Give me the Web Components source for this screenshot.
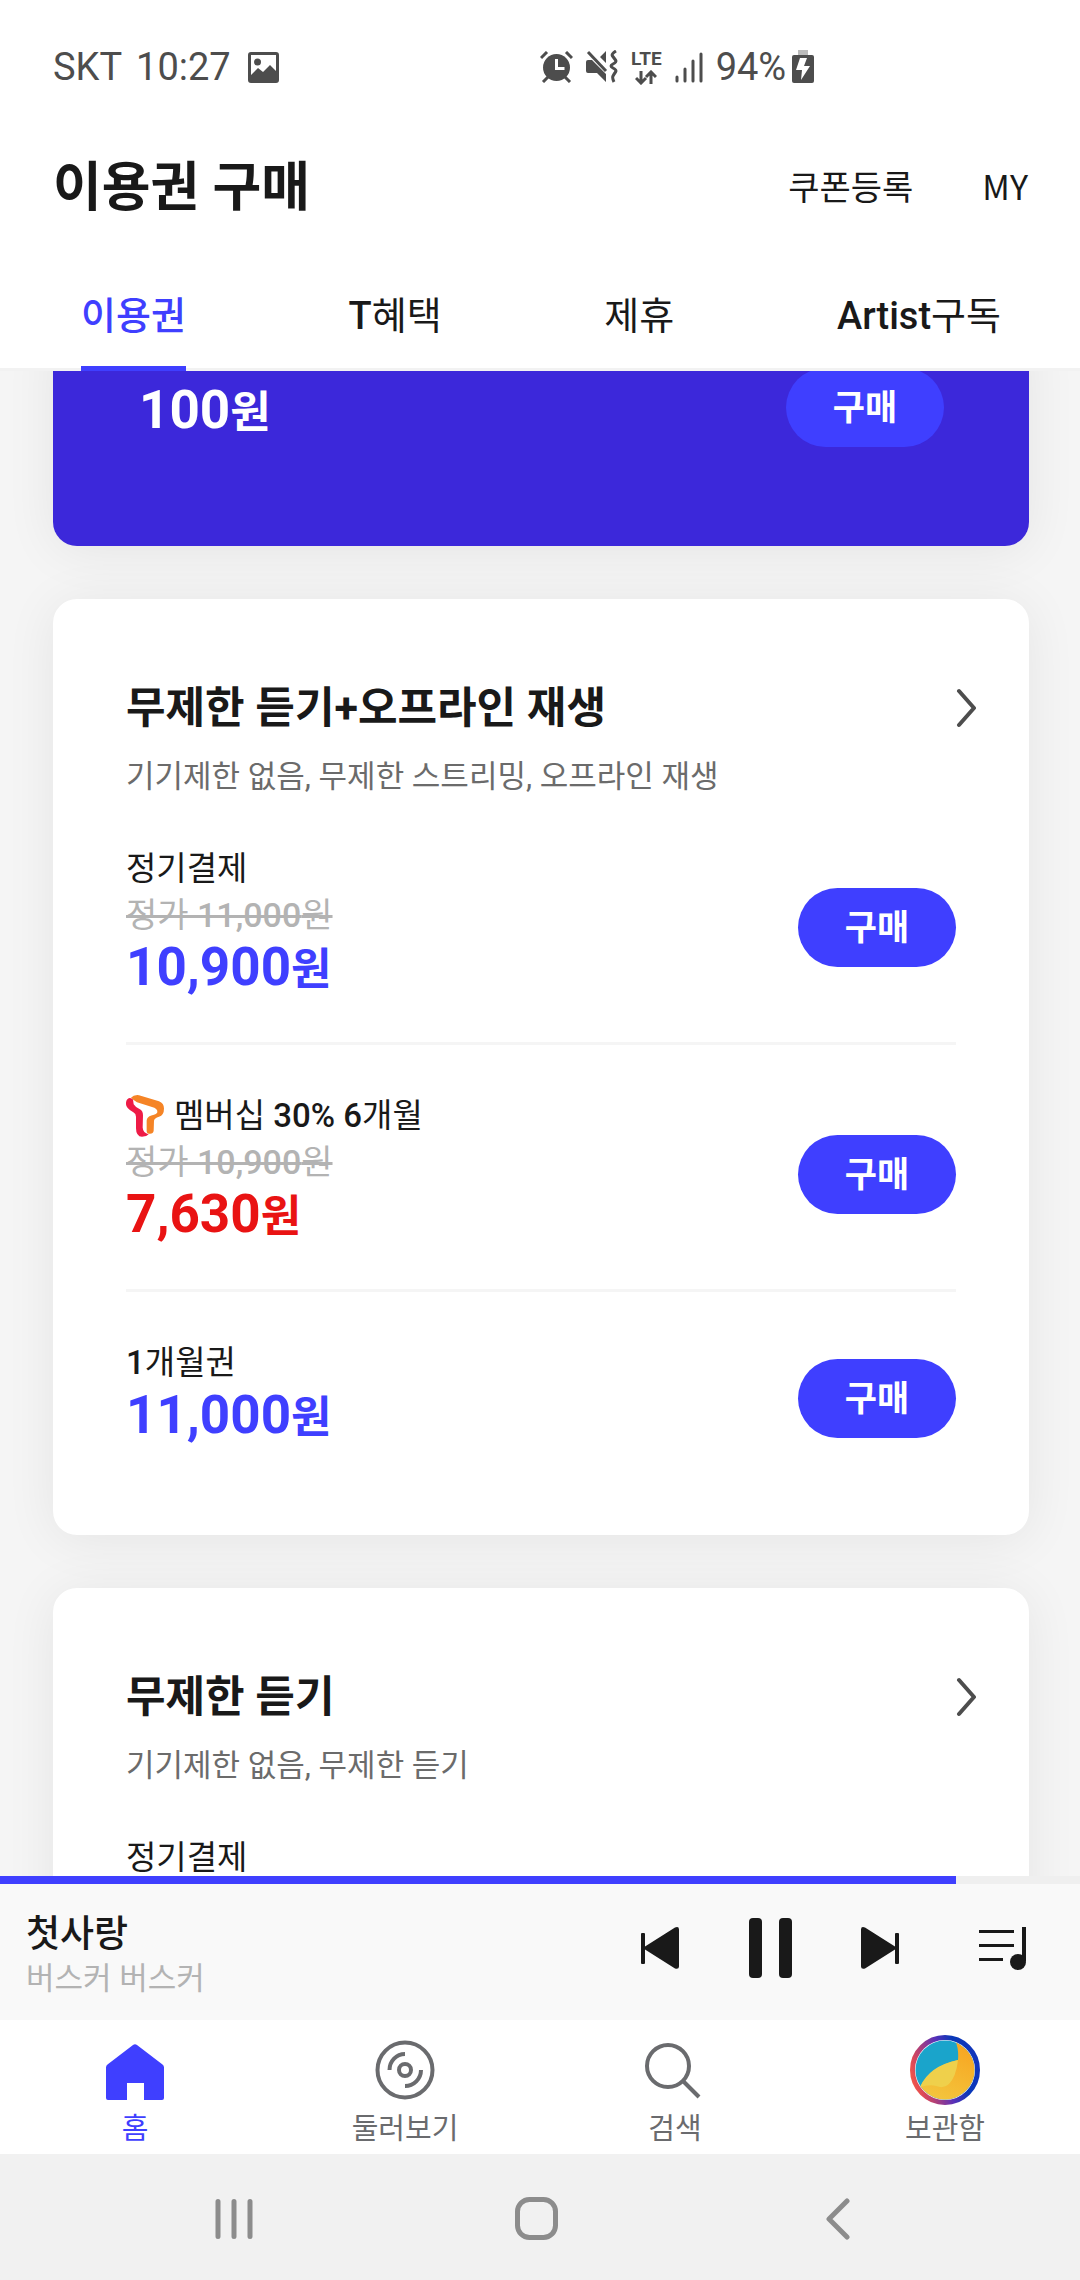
<!DOCTYPE html>
<html lang="ko">
<head>
<meta charset="utf-8">
<meta name="viewport" content="width=device-width, initial-scale=1">
<title>이용권 구매</title>
<style>
  :root {
    --blue: #3f3fff;
    --deep: #3c28da;
    --ink: #191919;
    --muted: #6b6b6b;
    --faint: #b3b3b3;
    --red: #e91313;
    --page: #f5f5f5;
  }
  body {
    margin: 0;
    background: var(--page);
    color: var(--ink);
    font-family: Roboto, "Noto Sans CJK KR", sans-serif;
  }
</style>
</head>
<body>
<music-app></music-app>

<script>
const RESET = `
  *, *::before { box-sizing: border-box; }
  button { font: inherit; color: inherit; background: none; border: 0; padding: 0; margin: 0; }
  a { color: inherit; text-decoration: none; }
  h1, h2, p { margin: 0; }
  b { font-weight: 500; }
  svg { display: block; flex: none; }
`;

class Base extends HTMLElement {
  connectedCallback() {
    if (this.shadowRoot) return;
    const root = this.attachShadow({ mode: "open" });
    root.innerHTML = `<style>${RESET}${this.css()}</style>${this.html()}`;
  }
}

/* Latin letters and digits carry a medium weight beside regular Hangul. */
const mixed = (text) => text.replace(/[A-Za-z0-9,%]+/g, "<b>$&</b>");

customElements.define("status-bar", class extends Base {
  css() { return `
    :host { display: grid; grid-template-columns: 1fr 1fr; align-items: center; height: 134px; color: #4d4d4d; font-size: 38px; line-height: 44px; }
    .left, .right { display: flex; align-items: center; }
    .left { padding-left: 53px; gap: 14px; }
    .left svg { margin-left: 3px; }
    .right { gap: 13px; }
    .lte { display: flex; flex-direction: column; align-items: center; gap: 2px; font-size: 19px; line-height: 18px; font-weight: 700; }
    .level { display: flex; align-items: center; gap: 6px; }
  `; }
  html() { return `
    <div class="left">
      <span>SKT</span><span>10:27</span>
      <svg width="31" height="31" viewBox="0 0 31 31" fill="currentColor" aria-hidden="true">
        <path fill-rule="evenodd" d="M3 0h25a3 3 0 0 1 3 3v25a3 3 0 0 1-3 3H3a3 3 0 0 1-3-3V3a3 3 0 0 1 3-3zM3 3v20l7-7 5 4 7-7 6 6V3z"/>
        <circle cx="9.500" cy="10" r="3.500"/>
      </svg>
    </div>
    <div class="right">
      <svg width="33" height="32" viewBox="540 51 33 32" fill="none" stroke="currentColor" stroke-width="3" aria-hidden="true">
        <circle cx="556.500" cy="67.500" r="13.500" fill="currentColor" stroke="none"/>
        <path d="M541 58l6-6M572 58l-6-6M549 76l-6 6M564 76l6 6"/>
        <path d="M556.500 59v9.500h8" stroke="#fff"/>
      </svg>
      <svg width="32" height="34" viewBox="586 50 32 34" fill="currentColor" aria-hidden="true">
        <path d="M586 62q0-2 2-2h4l14 14v8l-9-9h-9q-2 0-2-2zM606 51v12l-6-6z"/>
        <path d="M588 52l18 19" stroke="currentColor" stroke-width="3" fill="none"/>
        <path d="M616 51q-5 3-3.500 5t3 4-2.500 4 0 4 2.500 4-2.500 4 1 6" stroke="currentColor" stroke-width="3" fill="none"/>
      </svg>
      <span class="lte">LTE
        <svg width="22" height="15" viewBox="0 0 22 15" fill="none" stroke="currentColor" stroke-width="3" aria-hidden="true">
          <path d="M6 1v12M1 8l5 5 5-5M16 14V2M11 7l5-5 5 5"/>
        </svg>
      </span>
      <svg width="28" height="31" viewBox="0 0 28 31" stroke="currentColor" stroke-width="3" stroke-linecap="round" aria-hidden="true">
        <path d="M2 25v4M10 17v12M18 9v20M26 2v27"/>
      </svg>
      <span class="level">94%
        <svg width="22" height="34" viewBox="0 0 22 34" aria-hidden="true">
          <rect x="6" y="0" width="10" height="6" fill="#bbb"/>
          <rect x="0" y="5" width="22" height="28" rx="2" fill="currentColor"/>
          <path d="M8 8h7l-3 8h6L9 30l1-10H4z" fill="#fff"/>
        </svg>
      </span>
    </div>`; }
});

customElements.define("page-header", class extends Base {
  css() { return `
    :host { display: flex; align-items: center; justify-content: space-between; height: 104px; padding: 0 52px 0 53px; }
    h1 { padding-top: 4px; font-size: 53px; line-height: 76px; font-weight: 700; }
    nav { display: flex; gap: 69px; font-size: 34px; line-height: 50px; font-family: "Noto Sans CJK KR", sans-serif; }
  `; }
  html() { return `<h1><slot></slot></h1><nav><a href="#coupon">쿠폰등록</a><a href="#my">MY</a></nav>`; }
});

customElements.define("tab-bar", class extends Base {
  css() { return `
    :host { display: block; height: 133px; border-bottom: 3px solid #f2f2f2; }
    nav { display: flex; justify-content: space-between; padding: 0 79px 0 81px; font-size: 38px; line-height: 54px; }
    a { height: 133px; padding-top: 51px; }
    .on { font-weight: 500; color: var(--blue); border-bottom: 5px solid var(--blue); }
  `; }
  html() { return `<nav>
    <a class="on" href="#pass" aria-current="page">이용권</a>
    <a href="#benefit">${mixed("T혜택")}</a><a href="#partner">제휴</a><a href="#artist">${mixed("Artist구독")}</a></nav>`; }
});

customElements.define("buy-button", class extends Base {
  css() { return `
    :host { display: block; flex: none; }
    button { display: block; width: 158px; height: 79px; padding-top: 3px; border-radius: 40px; background: var(--blue); color: #fff; font-size: 35px; line-height: 50px; font-weight: 700; }
  `; }
  html() { return `<button type="button"><slot>구매</slot></button>`; }
});

customElements.define("price-tag", class extends Base {
  css() { return `
    :host { display: block; font-size: 53px; line-height: 58px; font-weight: 700; color: var(--blue); }
    span { font-size: 44px; line-height: 44px; }
  `; }
  html() { return `<slot></slot><span>원</span>`; }
});

customElements.define("plan-row", class extends Base {
  css() { return `
    :host { display: flex; align-items: center; justify-content: space-between; }
    .label { display: flex; align-items: center; gap: 10px; font-size: 33px; line-height: 46px; }
    .old { display: block; width: fit-content; font-size: 34px; line-height: 46px; color: var(--faint); text-decoration: line-through; text-decoration-thickness: 3px; }
    buy-button { margin-top: 12px; }
  `; }
  html() {
    const old = this.getAttribute("old");
    return `<div>
      <div class="label"><slot name="icon"></slot><span>${mixed(this.getAttribute("label"))}</span></div>
      ${old ? `<s class="old">${mixed(`정가 ${old}원`)}</s>` : ""}
      <slot></slot>
    </div>${this.querySelector("price-tag") ? "<buy-button></buy-button>" : ""}`;
  }
});

customElements.define("t-logo", class extends Base {
  css() { return `:host { display: block; } svg { overflow: visible; }`; }
  html() { return `<svg width="38" height="42" viewBox="138 825 114 125" role="img" aria-label="T">
    <path fill="#ee1b46" d="M138 852q-1-14 8-18 8-2 13 4l2 14q5 9 20 16 8 5 8 18l-1 36q1 17 18 20-7 8-20 8-18-2-18-26v-34q0-10-8-14-22-12-22-24z"/>
    <path fill="#f58426" d="M153 833q8-10 24-8l60 18q15 6 15 22 0 20-15 25-14 4-15 12l-1 30q-1 9-11 9-9 0-10-8v-32q1-11 14-15 18-5 18-10 1-8-9-13l-52-17q-10-5-18-13z"/>
  </svg>`; }
});

customElements.define("plan-card", class extends Base {
  css() { return `
    :host { display: block; padding: 80px 73px 91px; border-radius: 24px; background: #fff; box-shadow: 0 5px 52px rgba(0,0,0,.07); }
    header { display: flex; align-items: center; justify-content: space-between; margin-right: -20px; }
    h2 { font-size: 43px; line-height: 58px; font-weight: 700; }
    p { margin: 17px 0 46px; font-size: 31px; line-height: 46px; color: var(--muted); }
    ::slotted(plan-row:not(:last-child)) { padding-bottom: 46px; border-bottom: 3px solid #f5f5f5; margin-bottom: 48px; }
  `; }
  html() { return `
    <header><h2>${this.getAttribute("heading")}</h2>
      <a href="#detail" aria-label="자세히"><svg width="20" height="40" viewBox="0 0 20 40" fill="none" stroke="#4d4d4d" stroke-width="4" stroke-linecap="round" stroke-linejoin="round"><path d="M3 3l15 17L3 37"/></svg></a>
    </header>
    <p>${this.getAttribute("note")}</p><slot></slot>`; }
});

customElements.define("promo-card", class extends Base {
  css() { return `
    :host { display: flex; align-items: center; justify-content: space-between; padding: 38px 85px 99px 86px; border-radius: 0 0 24px 24px; background: var(--deep); box-shadow: 0 5px 52px rgba(0,0,0,.07); }
    price-tag { padding-top: 4px; color: #fff; }
  `; }
  html() { return `<price-tag>100</price-tag><buy-button></buy-button>`; }
});

customElements.define("mini-player", class extends Base {
  css() { return `
    :host { display: block; background: #f9f9f9; }
    .bar { height: 8px; background: #efefef; }
    .fill { width: 88.500%; height: 8px; background: var(--blue); }
    .body { display: flex; align-items: flex-start; justify-content: space-between; height: 136px; padding: 19px 53px 0 26px; }
    .text { padding-top: 9px; }
    .song { font-size: 37px; line-height: 46px; font-weight: 500; }
    .artist { font-size: 31px; line-height: 42px; color: var(--faint); }
    .controls { display: flex; align-items: center; color: var(--ink); }
    button { display: flex; align-items: center; justify-content: center; width: 110px; height: 90px; }
    .list { margin-left: 42px; width: 50px; }
    svg { fill: currentColor; stroke: currentColor; }
  `; }
  html() { return `
    <div class="bar" role="progressbar" aria-valuenow="88" aria-label="재생 위치"><div class="fill"></div></div>
    <div class="body">
      <div class="text"><p class="song">첫사랑</p><p class="artist">버스커 버스커</p></div>
      <div class="controls">
        <button type="button" aria-label="이전"><svg width="38" height="42" viewBox="0 0 38 42"><path stroke="none" d="M0 7q0-1 1-1h2q1 0 1 1v12.500L34 .500q4-1.500 4 2v37q0 3-4 2L4 22.500V36q0 1-1 1H1q-1 0-1-1z"/></svg></button>
        <button type="button" aria-label="일시정지"><svg width="43" height="60" viewBox="0 0 43 60"><rect stroke="none" width="13" height="60" rx="4"/><rect stroke="none" x="30" width="13" height="60" rx="4"/></svg></button>
        <button type="button" aria-label="다음"><svg width="38" height="42" viewBox="0 0 38 42"><path stroke="none" d="M38 7q0-1-1-1h-2q-1 0-1 1v12.500L4 .500Q0-1 0 2.500v37q0 3 4 2l30-19V36q0 1 1 1h2q1 0 1-1z"/></svg></button>
        <button class="list" type="button" aria-label="재생목록"><svg width="47" height="43" viewBox="0 0 47 43"><path fill="none" stroke-width="3" d="M0 4.500h35M0 18.500h35M0 32.500h24"/><path fill="none" stroke-width="4" d="M45 0v34"/><circle stroke="none" cx="39" cy="35" r="8"/></svg></button>
      </div>
    </div>`; }
});

customElements.define("bottom-nav", class extends Base {
  css() { return `
    :host { display: block; background: #fff; }
    nav { display: flex; height: 134px; color: #6a6b6e; }
    a { flex: 1; display: flex; flex-direction: column; align-items: center; gap: 1px; padding-top: 15px; font-size: 29px; line-height: 46px; }
    .on { color: var(--blue); }
  `; }
  html() { return `<nav>
    <a class="on" href="#home" aria-current="page"><svg width="70" height="70" viewBox="0 0 70 70" fill="currentColor" aria-hidden="true"><path d="M6 32.500q0-2 1.500-3L33 10q2-1.500 4 0l25.500 19.500q1.500 1 1.500 3V63q0 2-2 2H44V48H27v17H8q-2 0-2-2z"/></svg>홈</a>
    <a href="#browse"><svg width="70" height="70" viewBox="0 0 70 70" fill="none" stroke="currentColor" stroke-width="4" aria-hidden="true"><circle cx="35" cy="35" r="27.500"/><circle cx="35" cy="35" r="6"/><path d="M19.500 35A15.500 16 0 0 1 35 19M51 35a16 16 0 0 1-16 16"/></svg>둘러보기</a>
    <a href="#search"><svg width="70" height="70" viewBox="0 0 70 70" fill="none" stroke="currentColor" stroke-width="4" aria-hidden="true"><circle cx="28" cy="31" r="21"/><path d="M43 46l16 16"/></svg>검색</a>
    <a href="#library"><svg width="70" height="70" viewBox="0 0 70 70" aria-hidden="true">
      <defs>
        <linearGradient id="ring" x1="0" y1=".7" x2="1" y2=".4"><stop offset="0" stop-color="#f2574a"/><stop offset=".12" stop-color="#d8475a"/><stop offset=".5" stop-color="#5a30b8"/><stop offset=".75" stop-color="#0838b8"/><stop offset="1" stop-color="#1236bb"/></linearGradient>
        <linearGradient id="sand" x1=".8" y1="0" x2=".4" y2="1"><stop offset="0" stop-color="#f8a01c"/><stop offset="1" stop-color="#f3c63e"/></linearGradient>
        <clipPath id="disc"><circle cx="35" cy="35" r="29.500"/></clipPath>
      </defs>
      <circle cx="35" cy="35" r="32.500" fill="#fff" stroke="url(#ring)" stroke-width="5"/>
      <g clip-path="url(#disc)"><rect width="70" height="70" fill="#1aa4cb"/>
        <path fill="url(#sand)" d="M45 5q4 9 3 20-27 6-38 27v18h60V0H45z"/>
        <path fill="#efd04b" d="M48 25q-2 17-9 24-5 5-13 2-6-2-16 1 9-21 38-27z"/></g>
    </svg>보관함</a></nav>`; }
});

customElements.define("system-nav", class extends Base {
  css() { return `
    :host { display: flex; height: 126px; padding: 3px 91px 0 83px; box-sizing: border-box; background: #f1f1f1; color: #8c8c8c; }
    button { flex: 1; display: flex; align-items: center; justify-content: center; }
    svg { fill: none; stroke: currentColor; stroke-width: 5; stroke-linecap: round; stroke-linejoin: round; }
  `; }
  html() { return `
    <button type="button" aria-label="최근 앱"><svg width="40" height="42" viewBox="0 0 40 42"><path d="M4 3.500v35M20 3.500v35M36 3.500v35"/></svg></button>
    <button type="button" aria-label="홈 화면"><svg width="43" height="43" viewBox="0 0 43 43"><rect x="2.500" y="2.500" width="38" height="38" rx="12"/></svg></button>
    <button type="button" aria-label="뒤로"><svg width="24" height="42" viewBox="0 0 24 42"><path d="M21 3L3 21l18 18"/></svg></button>`; }
});

customElements.define("music-app", class extends Base {
  css() { return `
    :host { display: flex; flex-direction: column; height: 100vh; }
    .top { background: #fff; flex: none; position: relative; z-index: 1; }
    main { flex: 1; min-height: 0; overflow: hidden; padding: 0 51px 0 53px; display: flex; flex-direction: column; gap: 53px; }
    main > * { flex: none; }
    promo-card { margin-top: -41px; }
    mini-player, bottom-nav, system-nav { flex: none; }
    .red { color: var(--red); }
  `; }
  html() { return `
    <div class="top"><status-bar></status-bar><page-header>이용권 구매</page-header><tab-bar></tab-bar></div>
    <main>
      <promo-card></promo-card>
      <plan-card heading="무제한 듣기+오프라인 재생" note="기기제한 없음, 무제한 스트리밍, 오프라인 재생">
        <plan-row label="정기결제" old="11,000"><price-tag>10,900</price-tag></plan-row>
        <plan-row label="멤버십 30% 6개월" old="10,900"><t-logo slot="icon"></t-logo><price-tag class="red">7,630</price-tag></plan-row>
        <plan-row label="1개월권"><price-tag>11,000</price-tag></plan-row>
      </plan-card>
      <plan-card heading="무제한 듣기" note="기기제한 없음, 무제한 듣기">
        <plan-row label="정기결제"></plan-row>
      </plan-card>
    </main>
    <mini-player></mini-player><bottom-nav></bottom-nav><system-nav></system-nav>`; }
});
</script>
</body>
</html>
